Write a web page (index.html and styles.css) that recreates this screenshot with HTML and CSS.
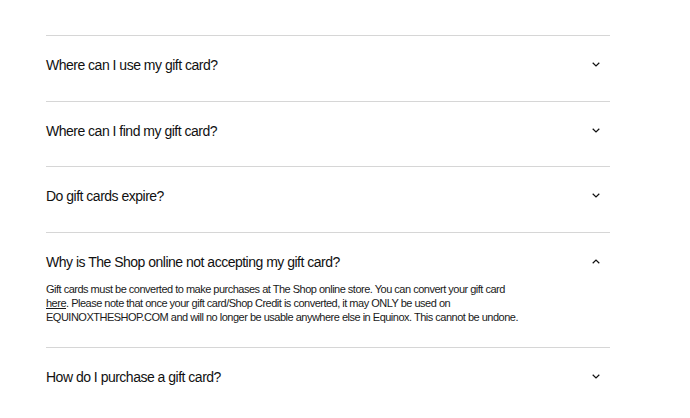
FILE: index.html
```html
<!DOCTYPE html>
<html lang="en">
<head>
<meta charset="utf-8">
<title>Gift card FAQ</title>
<link rel="stylesheet" href="styles.css">
</head>
<body>
<section class="faq">
  <div class="item">
    <div class="head"><span class="q">Where can I use my gift card?</span>
      <svg class="chev" width="8" height="5" viewBox="0 0 8 5"><path d="M0.7 0.8 L4 4 L7.3 0.8" fill="none" stroke="#111" stroke-width="1.2"/></svg></div>
  </div>
  <div class="item">
    <div class="head"><span class="q">Where can I find my gift card?</span>
      <svg class="chev" width="8" height="5" viewBox="0 0 8 5"><path d="M0.7 0.8 L4 4 L7.3 0.8" fill="none" stroke="#111" stroke-width="1.2"/></svg></div>
  </div>
  <div class="item">
    <div class="head"><span class="q">Do gift cards expire?</span>
      <svg class="chev" width="8" height="5" viewBox="0 0 8 5"><path d="M0.7 0.8 L4 4 L7.3 0.8" fill="none" stroke="#111" stroke-width="1.2"/></svg></div>
  </div>
  <div class="item open">
    <div class="head"><span class="q">Why is The Shop online not accepting my gift card?</span>
      <svg class="chev" width="8" height="5" viewBox="0 0 8 5"><path d="M0.7 4.2 L4 1 L7.3 4.2" fill="none" stroke="#111" stroke-width="1.2"/></svg></div>
    <p class="answer">Gift cards must be converted to make purchases at The Shop online store. You can convert your gift card <a href="#">here</a>. Please note that once your gift card/Shop Credit is converted, it may ONLY be used on EQUINOXTHESHOP.COM and will no longer be usable anywhere else in Equinox. This cannot be undone.</p>
  </div>
  <div class="item">
    <div class="head"><span class="q">How do I purchase a gift card?</span>
      <svg class="chev" width="8" height="5" viewBox="0 0 8 5"><path d="M0.7 0.8 L4 4 L7.3 0.8" fill="none" stroke="#111" stroke-width="1.2"/></svg></div>
  </div>
</section>
</body>
</html>
```
FILE: styles.css
```css
html, body {
  margin: 0;
  padding: 0;
  background: #fff;
}
body {
  font-family: "Liberation Sans", Arial, sans-serif;
  color: #111;
}
.faq {
  width: 564px;
  margin-left: 46px;
  padding-top: 35px;
}
.item {
  border-top: 1px solid #d6d6d6;
}
.head {
  display: flex;
  align-items: center;
  justify-content: space-between;
  padding: 21px 10px 27.6px 0;
}
.q {
  font-size: 14px;
  line-height: 16px;
  letter-spacing: -0.5px;
}
.chev {
  display: block;
  margin-top: -1px;
}
.open .head {
  padding-bottom: 12px;
}
.answer {
  margin: 0;
  padding: 0 0 23px 0;
  max-width: 475px;
  font-size: 11px;
  line-height: 14px;
  letter-spacing: -0.5px;
  color: #1a1a1a;
}
.answer a {
  color: inherit;
  text-decoration: underline;
}
```
